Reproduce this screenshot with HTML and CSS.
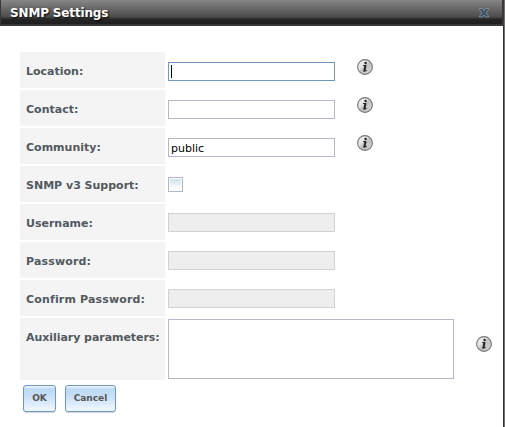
FILE: index.html
```html
<!DOCTYPE html>
<html lang="en">
<head>
<meta charset="utf-8">
<title>SNMP Settings</title>
<link rel="stylesheet" href="styles.css">
</head>
<body>
<svg class="defs" width="0" height="0" aria-hidden="true">
  <defs>
    <linearGradient id="disc" x1="0" y1="0" x2="1" y2="1">
      <stop offset="0" stop-color="#f4f4f4"/><stop offset=".38" stop-color="#e4e4e4"/>
      <stop offset=".5" stop-color="#c2c2c2"/><stop offset="1" stop-color="#d4d4d4"/>
    </linearGradient>
    <symbol id="info" viewBox="0 0 16 16">
      <circle cx="8" cy="8" r="7.4" fill="url(#disc)" stroke="#777" stroke-width="1.1"/>
      <circle cx="8.6" cy="4" r="1.2" fill="#222"/>
      <path d="M6 6.5h3M6.2 12.1L9.8 11.6" fill="none" stroke="#333" stroke-width="1"/>
      <path d="M8.5 6.1L7.4 12.3" stroke="#222" stroke-width="2"/>
    </symbol>
  </defs>
</svg>
<div class="dialog">
  <header class="titlebar">
    <h1>SNMP Settings</h1>
    <svg class="close" width="12" height="12" viewBox="0 0 12 12">
      <path d="M1.5 1.5h3L6 3.7l1.5-2.2h3v1L8 6l2.5 3v1h-3L6 8l-1.5 2h-3V9L4 6 1.5 2.5z" fill="#3c5368" stroke="#8c969e" stroke-width=".8"/>
    </svg>
  </header>
  <form class="settings">
    <div class="row"><label>Location:</label><div class="field"><span class="input focus"><i class="caret"></i></span><svg class="info"><use href="#info"/></svg></div></div>
    <div class="row"><label>Contact:</label><div class="field"><span class="input"></span><svg class="info"><use href="#info"/></svg></div></div>
    <div class="row"><label>Community:</label><div class="field"><span class="input">public</span><svg class="info"><use href="#info"/></svg></div></div>
    <div class="row"><label>SNMP v3 Support:</label><div class="field"><span class="check"></span></div></div>
    <div class="row"><label>Username:</label><div class="field"><span class="input disabled"></span></div></div>
    <div class="row"><label class="wide">Password:</label><div class="field"><span class="input disabled"></span></div></div>
    <div class="row"><label class="wide">Confirm Password:</label><div class="field"><span class="input disabled"></span></div></div>
    <div class="row tall"><label>Auxiliary parameters:</label><div class="field"><span class="area"></span><svg class="info"><use href="#info"/></svg></div></div>
    <div class="actions"><button type="button" class="ok">OK</button><button type="button" class="cancel">Cancel</button></div>
  </form>
</div>
</body>
</html>
```
FILE: styles.css
```css
* { box-sizing: border-box; }
body { margin: 0; overflow: hidden; background: #fff; font: 11px "DejaVu Sans", sans-serif; }
.defs { position: absolute; }
.dialog { width: 505px; height: 427px; border-right: 1px solid #707070; box-shadow: inset -1px 0 #303030; }
.titlebar {
  display: flex; justify-content: space-between; align-items: center;
  height: 26px; padding: 1px 12px 0 9px;
  border: solid #3b3638; border-width: 0 2px 2px 1px;
  background: linear-gradient(#868686, #4c4c4c 70%, #333 77%, #262626 79%, #202020);
}
h1 { margin: 0; padding-top: 1px; color: #fff; font: bold 12px/16px "DejaVu Sans", sans-serif; letter-spacing: -.15px; text-shadow: 1px 1px 2px #000; }
.settings { display: flex; flex-direction: column; gap: 2px; padding: 26px 0 0 20px; }
.row { display: flex; height: 36px; gap: 3px; }
.row.tall { height: 62px; }
.row label {
  width: 145px; flex: none; padding: 13px 0 0 6px; background: #f4f4f4;
  color: #525960; font-weight: bold; line-height: 14px; white-space: nowrap;
}
.row label.wide { letter-spacing: .16px; }
.row.tall label { letter-spacing: -.05px; }
.field { display: flex; align-items: flex-start; gap: 22px; }
.input {
  display: flex; width: 167px; height: 19px; margin-top: 10px; padding: 0 2px;
  border: 1px solid #b5b8c8; background: #fff; color: #000; line-height: 19px;
}
.input.focus { border-color: #7098bc; }
.input.disabled { margin-top: 9px; border-color: #d2d2d2; background: #eee; }
.caret { width: 1px; height: 13px; margin-top: 2px; background: #000; }
.info { width: 16px; height: 16px; margin-top: 7px; }
.check {
  width: 15px; height: 15px; margin-top: 11px; padding: 1px;
  border: 1px solid #b0b6c6; background: linear-gradient(#cee1ec, #fff 90%) content-box, #fff;
}
.area { width: 286px; height: 60px; margin-top: 1px; border: 1px solid #b5b8c8; }
.tall .info { margin-top: 18px; }
.actions { display: flex; gap: 9px; padding: 3px 0 0 3px; }
.actions button {
  height: 27px; padding: 0 0 1px; border: 1px solid #7098bc; border-radius: 3px;
  background: linear-gradient(#f4f9fe, #bdd9f4 3px, #c7dff6 40%, #f1f8ff);
  box-shadow: 0 1px 1px #d5d5d5; color: #555; font: bold 9px "DejaVu Sans", sans-serif;
}
.ok { width: 33px; }
.cancel { width: 51px; }
```
